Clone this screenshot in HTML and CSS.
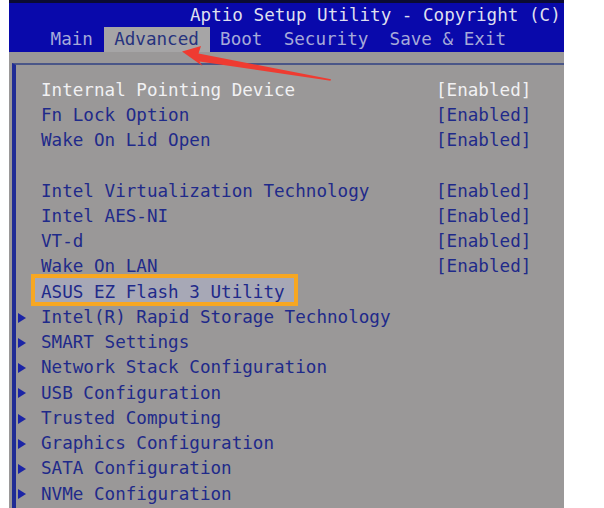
FILE: index.html
```html
<!DOCTYPE html>
<html>
<head>
<meta charset="utf-8">
<link rel="stylesheet" href="styles.css">
</head>
<body>
<div class="screen">
  <header class="top">
    <div class="title">Aptio Setup Utility - Copyright (C)</div>
    <nav class="menu">
      <span class="tab">Main</span>
      <span class="tab active">Advanced</span>
      <span class="tab">Boot</span>
      <span class="tab">Security</span>
      <span class="tab">Save &amp; Exit</span>
    </nav>
  </header>
  <main class="panel">
    <div class="box">
      <div class="row sel"><span class="mark"></span><span class="label">Internal Pointing Device</span><span class="value">[Enabled]</span></div>
      <div class="row"><span class="mark"></span><span class="label">Fn Lock Option</span><span class="value">[Enabled]</span></div>
      <div class="row"><span class="mark"></span><span class="label">Wake On Lid Open</span><span class="value">[Enabled]</span></div>
      <div class="row"></div>
      <div class="row"><span class="mark"></span><span class="label">Intel Virtualization Technology</span><span class="value">[Enabled]</span></div>
      <div class="row"><span class="mark"></span><span class="label">Intel AES-NI</span><span class="value">[Enabled]</span></div>
      <div class="row"><span class="mark"></span><span class="label">VT-d</span><span class="value">[Enabled]</span></div>
      <div class="row"><span class="mark"></span><span class="label">Wake On LAN</span><span class="value">[Enabled]</span></div>
      <div class="row"><span class="mark"></span><span class="label"><span class="flash">ASUS EZ Flash 3 Utility</span></span></div>
      <div class="row"><span class="mark"><span class="tri"></span></span><span class="label">Intel(R) Rapid Storage Technology</span></div>
      <div class="row"><span class="mark"><span class="tri"></span></span><span class="label">SMART Settings</span></div>
      <div class="row"><span class="mark"><span class="tri"></span></span><span class="label">Network Stack Configuration</span></div>
      <div class="row"><span class="mark"><span class="tri"></span></span><span class="label">USB Configuration</span></div>
      <div class="row"><span class="mark"><span class="tri"></span></span><span class="label">Trusted Computing</span></div>
      <div class="row"><span class="mark"><span class="tri"></span></span><span class="label">Graphics Configuration</span></div>
      <div class="row"><span class="mark"><span class="tri"></span></span><span class="label">SATA Configuration</span></div>
      <div class="row"><span class="mark"><span class="tri"></span></span><span class="label">NVMe Configuration</span></div>
    </div>
  </main>
  <svg class="arrow" width="604" height="508" viewBox="0 0 604 508">
    <path d="M182,51.5 L201,46 L198.5,53.5 L331,79.2 L330.5,80.8 L199.5,61.5 L202.5,66 Z" fill="#ef3b31"/>
  </svg>
</div>
</body>
</html>
```
FILE: styles.css
```css
html, body {
  margin: 0;
  padding: 0;
  background: #ffffff;
}

body {
  width: 604px;
  height: 508px;
  overflow: hidden;
}

.screen {
  margin-left: 9px;
  width: 555px;
  height: 508px;
  background: #9a9898;
  font-family: "DejaVu Sans Mono", "Liberation Mono", monospace;
  font-size: 17.6px;
  white-space: nowrap;
  overflow: hidden;
}

.top {
  background: #0909ab;
  border-top: 3px solid #0b0b33;
  height: 49px;
}

.title {
  height: 24px;
  line-height: 24px;
  padding-left: 181px;
  color: #dedfee;
}

.menu {
  display: flex;
  height: 25px;
  padding-left: 31px;
}

.tab {
  line-height: 25px;
  padding: 0 10.6px;
  color: #a6a9d9;
}

.tab.active {
  background: #a6a5a6;
  color: #26337e;
}

.panel {
  padding-top: 11px;
}

.box {
  margin-left: 3px;
  border-top: 2px solid #4a5688;
  border-left: 4px solid #1f2c95;
  padding-top: 12.7px;
  height: 440px;
}

.row {
  display: flex;
  height: 25.25px;
  line-height: 25.25px;
  color: #1f2a8a;
}

.row.sel {
  color: #f1f1f3;
}

.mark {
  width: 25px;
  flex: none;
  display: flex;
  align-items: center;
  padding-left: 2px;
  box-sizing: border-box;
}

.tri {
  width: 0;
  height: 0;
  border-top: 5.5px solid transparent;
  border-bottom: 5.5px solid transparent;
  border-left: 8px solid #1b24a6;
}

.label {
  width: 395px;
  flex: none;
}

.value {
  flex: none;
}

.flash {
  position: relative;
  z-index: 0;
  display: inline-block;
}

.flash::after {
  content: "";
  position: absolute;
  z-index: -1;
  top: -6px;
  bottom: -1px;
  left: -10px;
  right: -13px;
  border: 4px solid #f7a722;
  background: #a7a8b6;
}

.arrow {
  position: absolute;
  left: 0;
  top: 0;
  pointer-events: none;
}
```
